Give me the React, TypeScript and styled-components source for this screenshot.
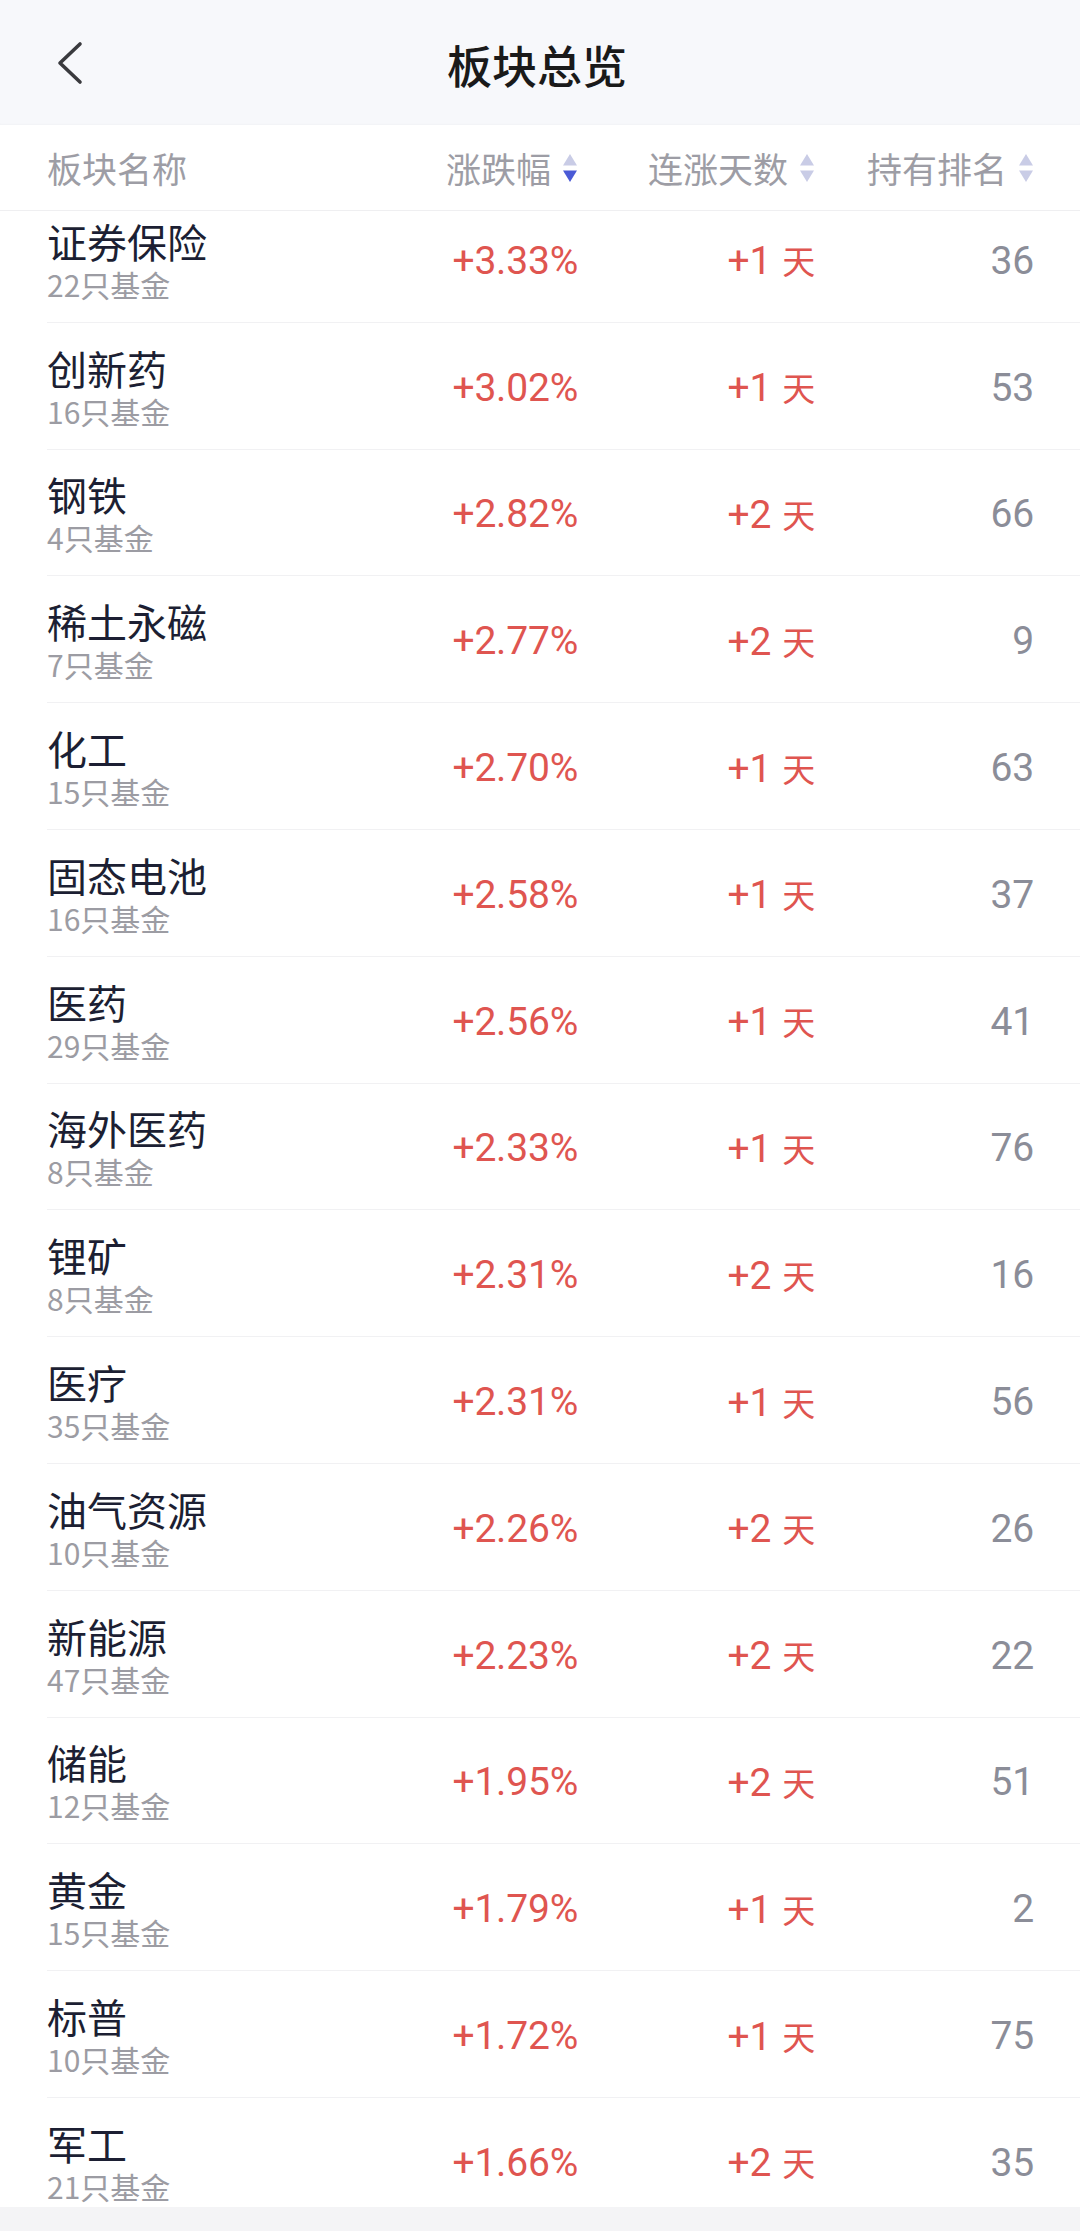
import React from "react";
import styled, { createGlobalStyle } from "styled-components";

const GlobalStyle = createGlobalStyle`
  html, body {
    margin: 0;
    padding: 0;
    background: #ffffff;
  }
  body {
    font-family: "Noto Sans CJK SC", "Noto Sans", sans-serif;
    -webkit-font-smoothing: antialiased;
  }
  * { box-sizing: border-box; }
`;

const Page = styled.div`
  width: 1080px;
  height: 2231px;
  display: flex;
  flex-direction: column;
  overflow: hidden;
  background: #ffffff;
`;

const NavBar = styled.header`
  height: 125px;
  flex: none;
  display: grid;
  grid-template-columns: 1fr auto 1fr;
  align-items: center;
  padding: 0 58px 0 52px;
  background: #f7f8fb;
  box-shadow: inset 0 -2px 3px -2px rgba(0, 0, 0, 0.05);
`;

const BackButton = styled.button`
  justify-self: start;
  width: 36px;
  height: 50px;
  padding: 0;
  border: none;
  background: transparent;
  display: flex;
  align-items: center;
  justify-content: center;
  cursor: pointer;
`;

const Title = styled.h1`
  margin: 0;
  font-family: "Noto Sans CJK SC", sans-serif;
  font-size: 45px;
  font-weight: 500;
  color: #1a1a1a;
  line-height: 1;
  letter-spacing: 0;
  transform: translateY(2px);
`;

const TableHead = styled.div`
  height: 86px;
  flex: none;
  display: grid;
  grid-template-columns: 331px 200px 237px 219px;
  align-items: center;
  padding: 0 45px 0 47px;
  border-bottom: 1px solid #efeff1;
  background: #ffffff;
`;

const HeadCell = styled.div<{ $align?: "left" | "right" }>`
  display: flex;
  align-items: center;
  justify-content: ${(p) => (p.$align === "left" ? "flex-start" : "flex-end")};
  gap: 11px;
  font-size: 35px;
  color: #9d9da5;
  line-height: 1;
  white-space: nowrap;
`;

const Viewport = styled.div`
  flex: 1;
  overflow: hidden;
  background: #ffffff;
`;

const List = styled.div`
  margin-top: -15px;
`;

const Row = styled.div`
  height: 126.8px;
  margin-left: 47px;
  padding-right: 46px;
  display: grid;
  grid-template-columns: 331px 200px 237px 219px;
  align-items: center;
  border-bottom: 1px solid #f1f1f3;
`;

const NameBlock = styled.div`
  display: flex;
  flex-direction: column;
  padding-top: 2px;
`;

const Name = styled.div`
  font-size: 40px;
  line-height: 46px;
  color: #1c1f33;
  white-space: nowrap;
`;

const Sub = styled.div`
  margin-top: 2px;
  font-size: 30px;
  line-height: 36px;
  color: #9c9ca3;
  white-space: nowrap;
`;

const Value = styled.div<{ $tone: "up" | "muted" }>`
  text-align: right;
  padding-top: 4px;
  font-family: "Roboto", "Noto Sans CJK SC", sans-serif;
  font-size: 39px;
  font-weight: 400;
  line-height: 42px;
  letter-spacing: -0.2px;
  color: ${(p) => (p.$tone === "up" ? "#df5550" : "#8b8d98")};
  white-space: nowrap;
`;

const DayUnit = styled.span`
  font-family: "Noto Sans CJK SC", sans-serif;
  font-size: 33px;
  font-weight: 400;
  margin-left: 11px;
`;

const Footer = styled.div`
  height: 24px;
  flex: none;
  background: #f4f4f6;
`;

const ChevronLeft = () => (
  <svg width="30" height="44" viewBox="0 0 30 44" fill="none">
    <polyline
      points="25,3 5,22 25,41"
      stroke="#3a3a3e"
      strokeWidth="3.6"
      strokeLinecap="round"
      strokeLinejoin="round"
    />
  </svg>
);

const SortIcon = ({ active }: { active?: "up" | "down" }) => (
  <svg width="16" height="32" viewBox="0 0 16 32">
    <polygon points="8,2 15,13.5 1,13.5" fill={active === "up" ? "#4a5ad6" : "#c9cce6"} />
    <polygon points="1,18.5 15,18.5 8,30" fill={active === "down" ? "#4a5ad6" : "#c9cce6"} />
  </svg>
);

type Sector = { name: string; funds: number; change: string; days: number; rank: number };

const sectors: Sector[] = [
  { name: "证券保险", funds: 22, change: "+3.33%", days: 1, rank: 36 },
  { name: "创新药", funds: 16, change: "+3.02%", days: 1, rank: 53 },
  { name: "钢铁", funds: 4, change: "+2.82%", days: 2, rank: 66 },
  { name: "稀土永磁", funds: 7, change: "+2.77%", days: 2, rank: 9 },
  { name: "化工", funds: 15, change: "+2.70%", days: 1, rank: 63 },
  { name: "固态电池", funds: 16, change: "+2.58%", days: 1, rank: 37 },
  { name: "医药", funds: 29, change: "+2.56%", days: 1, rank: 41 },
  { name: "海外医药", funds: 8, change: "+2.33%", days: 1, rank: 76 },
  { name: "锂矿", funds: 8, change: "+2.31%", days: 2, rank: 16 },
  { name: "医疗", funds: 35, change: "+2.31%", days: 1, rank: 56 },
  { name: "油气资源", funds: 10, change: "+2.26%", days: 2, rank: 26 },
  { name: "新能源", funds: 47, change: "+2.23%", days: 2, rank: 22 },
  { name: "储能", funds: 12, change: "+1.95%", days: 2, rank: 51 },
  { name: "黄金", funds: 15, change: "+1.79%", days: 1, rank: 2 },
  { name: "标普", funds: 10, change: "+1.72%", days: 1, rank: 75 },
  { name: "军工", funds: 21, change: "+1.66%", days: 2, rank: 35 },
];

export default function App() {
  return (
    <>
      <GlobalStyle />
      <Page>
        <NavBar>
          <BackButton aria-label="返回">
            <ChevronLeft />
          </BackButton>
          <Title>板块总览</Title>
          <div />
        </NavBar>
        <TableHead>
          <HeadCell $align="left">板块名称</HeadCell>
          <HeadCell>
            涨跌幅
            <SortIcon active="down" />
          </HeadCell>
          <HeadCell>
            连涨天数
            <SortIcon />
          </HeadCell>
          <HeadCell>
            持有排名
            <SortIcon />
          </HeadCell>
        </TableHead>
        <Viewport>
          <List>
            {sectors.map((s) => (
              <Row key={s.name}>
                <NameBlock>
                  <Name>{s.name}</Name>
                  <Sub>{s.funds}只基金</Sub>
                </NameBlock>
                <Value $tone="up">{s.change}</Value>
                <Value $tone="up">
                  +{s.days}
                  <DayUnit>天</DayUnit>
                </Value>
                <Value $tone="muted">{s.rank}</Value>
              </Row>
            ))}
          </List>
        </Viewport>
        <Footer />
      </Page>
    </>
  );
}
